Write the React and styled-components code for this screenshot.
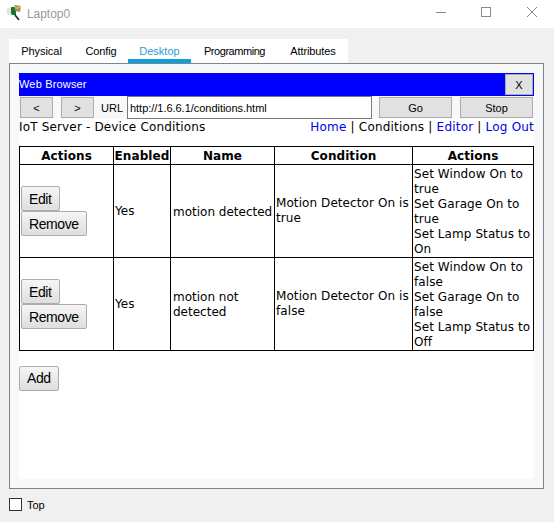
import React from "react";
import styled, { createGlobalStyle } from "styled-components";

const Global = createGlobalStyle`
  html, body { margin: 0; padding: 0; }
  body { width: 554px; height: 522px; overflow: hidden; background: #f0f0f0; font-family: "Liberation Sans", Arial, sans-serif; }
`;
const Frame = styled.div`display:flex;flex-direction:column;width:554px;height:522px;background:#f0f0f0;`;
const TitleBar = styled.div`display:flex;align-items:center;height:28px;background:#fff;padding-left:6px;flex:none;`;
const TitleText = styled.span`font-size:12px;color:#9a9a9a;margin-left:5px;letter-spacing:-.05px;`;
const WinButtons = styled.div`display:flex;margin-left:auto;align-items:center;`;
const WinButton = styled.svg`width:46px;height:28px;display:block;`;
const Tabs = styled.div`display:flex;align-self:flex-start;margin:11px 0 0 9px;height:24px;width:339px;background:#fff;flex:none;`;
const Tab = styled.div`
  box-sizing:border-box;height:24px;width:${p=>p.$w}px;padding-top:6px;text-align:center;font-size:11px;white-space:nowrap;
  letter-spacing:${p=>p.$ls||0}px;
  color:${p=>p.$active?"#2a9fd6":"#000"};border-bottom:${p=>p.$active?"4px solid #0e9fd8":"none"};
`;
const Panel = styled.div`box-sizing:border-box;width:535px;height:426px;margin-left:9px;border:1px solid #7f8590;background:#f8f8f8;padding:9px;flex:none;`;
const Page = styled.div`display:flex;flex-direction:column;height:406px;background:#fff;`;
const BlueBar = styled.div`display:flex;align-items:center;justify-content:space-between;height:23px;background:#0000ff;color:#fff;font-size:11px;letter-spacing:.17px;`;
const BarTitle = styled.span`margin-bottom:2px;`;
const CloseButton = styled.button`box-sizing:border-box;width:28px;height:21px;margin:0 1px 0 0;padding:0;background:#e1e1e1;border:1px solid #adadad;font:11px "Liberation Sans",sans-serif;color:#000;`;
const Toolbar = styled.div`display:flex;align-items:center;height:23px;padding-left:1px;background:#f8f8f8;`;
const NavButton = styled.button`box-sizing:border-box;width:33px;height:21px;margin-right:${p=>p.$mr}px;padding:0;background:#e1e1e1;border:1px solid #adadad;font:11px "Liberation Sans",sans-serif;color:#000;`;
const UrlLabel = styled.span`font-size:11px;width:26px;margin-left:7px;flex:none;`;
const UrlBox = styled.div`box-sizing:border-box;width:245px;height:23px;border:1px solid #7a7a7a;background:#fff;font-size:11px;padding:5px 0 0 2px;margin-right:7px;letter-spacing:-.03px;`;
const WideButton = styled.button`box-sizing:border-box;width:73px;height:21px;margin-right:${p=>p.$mr}px;padding:0;background:#e1e1e1;border:1px solid #adadad;font:11px "Liberation Sans",sans-serif;color:#000;`;
const Content = styled.div`font-family:"DejaVu Sans",Verdana,sans-serif;font-size:12px;color:#000;letter-spacing:.08px;`;
const HeadingRow = styled.div`display:flex;justify-content:space-between;height:27px;line-height:16px;letter-spacing:.16px;`;
const Links = styled.span`letter-spacing:.2px;`;
const Link = styled.span`color:#0000ee;`;
const Table = styled.table`border-collapse:collapse;table-layout:fixed;width:514px;line-height:15px;`;
const Th = styled.th`box-sizing:border-box;border:1px solid #000;width:${p=>p.$w}px;padding:2px 0 0;height:18px;font-size:12px;white-space:nowrap;`;
const Td = styled.td`box-sizing:border-box;border:1px solid #000;padding:1px;height:93px;vertical-align:middle;`;
const NameCell = styled(Td)`padding:2px 1px 0 2px;letter-spacing:0;`;
const ActionsCell = styled(Td)`padding:2px 1px 0;`;
const Btn = styled.button`
  display:block;box-sizing:border-box;height:25px;padding:0 7px;font:14px "Liberation Sans",sans-serif;color:#000;letter-spacing:-.4px;
  border:1px solid #adadad;border-radius:2px;background:linear-gradient(#f6f6f6,#dedede);
`;
const AddBtn = styled(Btn)`margin-top:15px;padding-bottom:1px;`;
const Bottom = styled.label`display:flex;align-items:center;margin:9px 0 0 9px;font-size:11px;letter-spacing:-.05px;`;
const Check = styled.span`box-sizing:border-box;width:13px;height:13px;border:1px solid #333;background:#fff;margin-right:5px;`;

const rows=[
 {name:"motion detected",cond:"Motion Detector On is true",acts:["Set Window On to true","Set Garage On to true","Set Lamp Status to On"]},
 {name:"motion not detected",cond:"Motion Detector On is false",acts:["Set Window On to false","Set Garage On to false","Set Lamp Status to Off"]},
];

export default function App(){
 return <Frame><Global/>
  <TitleBar>
   <svg width="16" height="18" viewBox="0 0 16 18">
    <circle cx="4.5" cy="6.5" r="4" fill="#dfe4e6"/>
    <path d="M5 2h5v8H6l-1-2z" fill="#0d7a2b"/>
    <path d="M8 0l7 1-1 6-5-1z" fill="#a98c45"/>
    <path d="M8 0.5l3 3 4-2.5" fill="none" stroke="#e6d9a8"/>
    <path d="M9 10l4 5" stroke="#222" strokeWidth="1.6"/>
   </svg>
   <TitleText>Laptop0</TitleText>
   <WinButtons>
    <WinButton viewBox="0 0 46 28"><path d="M20 12.5h10" stroke="#888"/></WinButton>
    <WinButton viewBox="0 0 46 28"><rect x="19.5" y="7.5" width="9" height="9" fill="none" stroke="#888"/></WinButton>
    <WinButton viewBox="0 0 46 28"><path d="M19 7l10 10M29 7L19 17" stroke="#888"/></WinButton>
   </WinButtons>
  </TitleBar>
  <Tabs>
   <Tab $w={65} $ls={-.05}>Physical</Tab><Tab $w={54} $ls={-.1}>Config</Tab><Tab $w={63} $active>Desktop</Tab><Tab $w={87} $ls={-.45}>Programming</Tab><Tab $w={70} $ls={-.1}>Attributes</Tab>
  </Tabs>
  <Panel><Page>
   <BlueBar><BarTitle>Web Browser</BarTitle><CloseButton>X</CloseButton></BlueBar>
   <Toolbar>
    <NavButton $mr={8}>&lt;</NavButton><NavButton $mr={0}>&gt;</NavButton>
    <UrlLabel>URL</UrlLabel><UrlBox>http://1.6.6.1/conditions.html</UrlBox>
    <WideButton $mr={8}>Go</WideButton><WideButton $mr={0}>Stop</WideButton>
   </Toolbar>
   <Content>
    <HeadingRow><span>IoT Server - Device Conditions</span>
     <Links><Link>Home</Link> | Conditions | <Link>Editor</Link> | <Link>Log Out</Link></Links>
    </HeadingRow>
    <Table><thead><tr>
     <Th $w={94}>Actions</Th><Th $w={57}>Enabled</Th><Th $w={104}>Name</Th><Th $w={138}>Condition</Th><Th $w={121}>Actions</Th>
    </tr></thead><tbody>
    {rows.map(r=><tr key={r.name}>
     <Td><Btn>Edit</Btn><Btn>Remove</Btn></Td>
     <Td>Yes</Td><NameCell>{r.name}</NameCell><Td>{r.cond}</Td>
     <ActionsCell>{r.acts.map(a=><div key={a}>{a}</div>)}</ActionsCell>
    </tr>)}
    </tbody></Table>
    <AddBtn>Add</AddBtn>
   </Content>
  </Page></Panel>
  <Bottom><Check/>Top</Bottom>
 </Frame>;
}
